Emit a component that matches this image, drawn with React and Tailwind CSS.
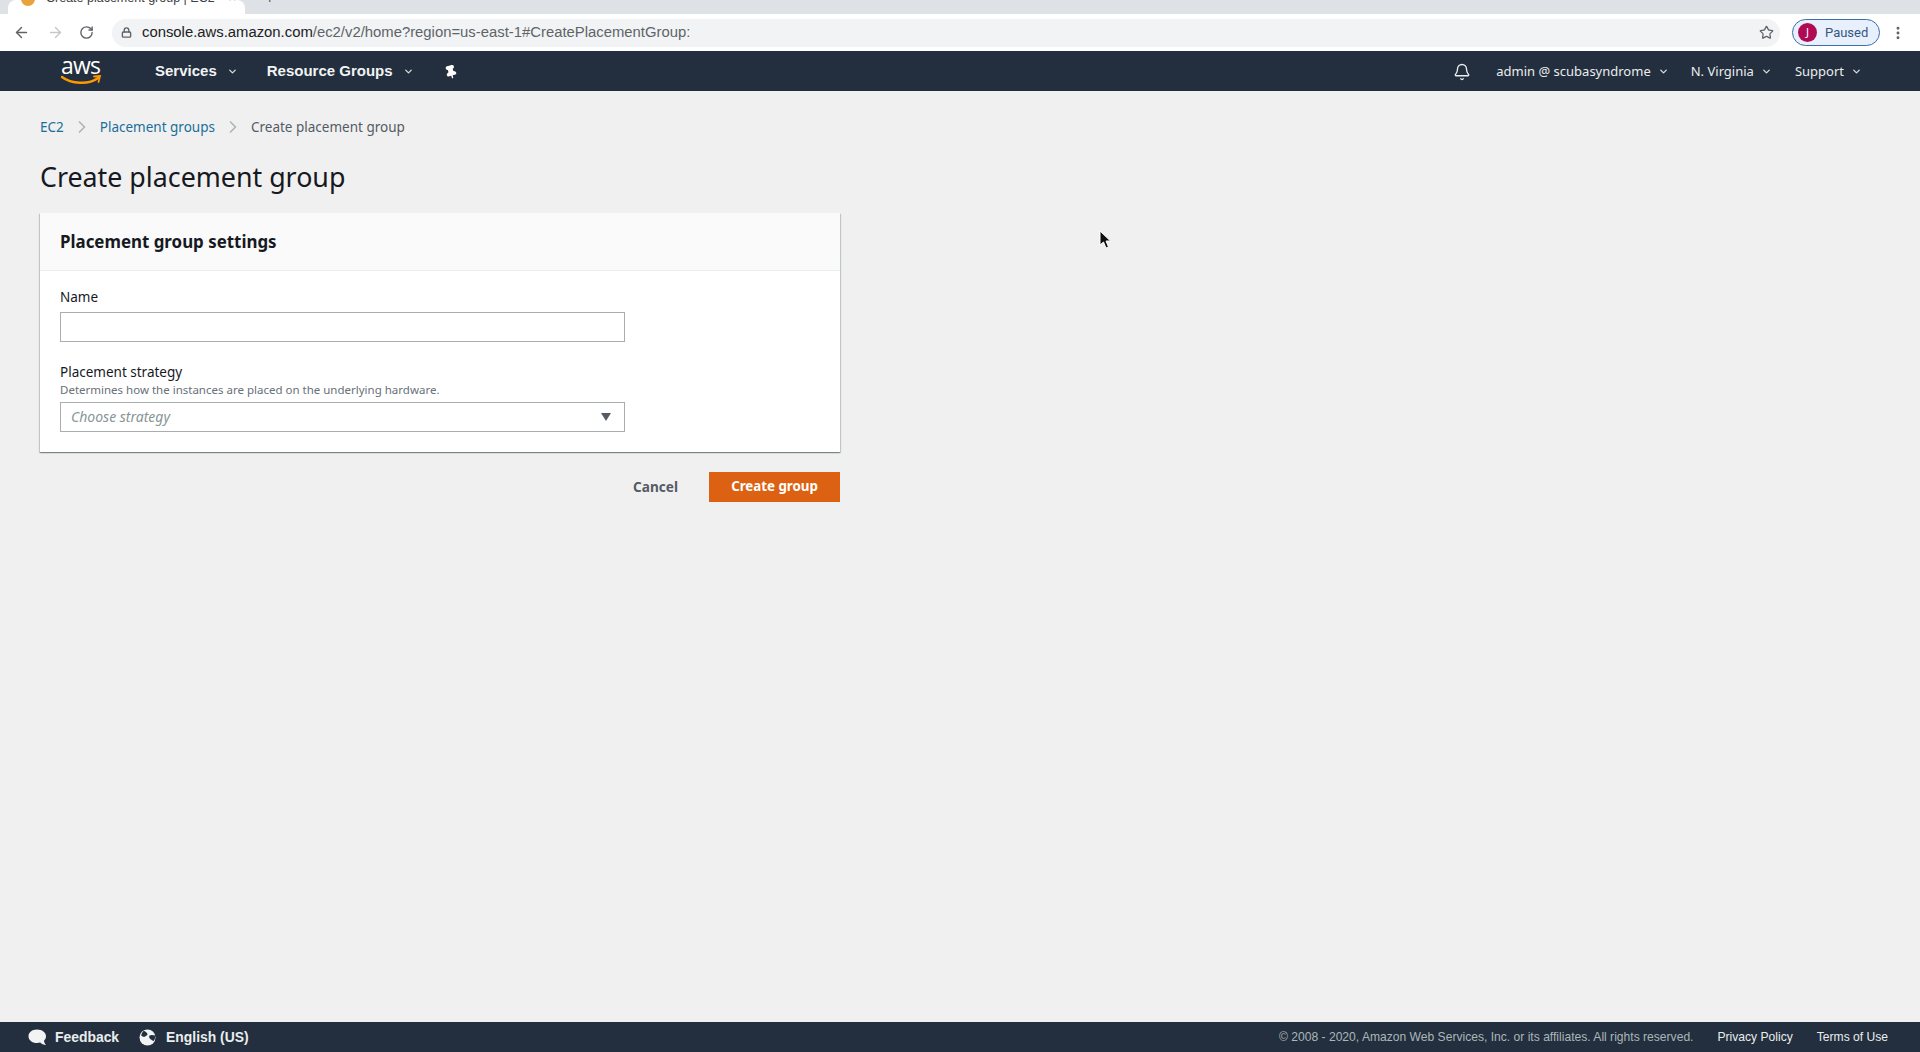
import React from "react";
import { ArrowLeft, ArrowRight, RotateCw, Lock, Star, Bell, ChevronRight, ChevronDown, Pin, MoreVertical } from "lucide-react";

function NavMenu({ label, className, gap = "ml-[7px]" }) {
  return (
    <div className={`flex items-center ${className}`}>
      <span>{label}</span>
      <ChevronDown size={11} strokeWidth={3} className={`${gap} text-[#d5dbdb]`} />
    </div>
  );
}

function AwsLogo() {
  return (
    <svg width="44" height="30" viewBox="0 0 44 30">
      <text x="22" y="17" textAnchor="middle" fontFamily="Open Sans, sans-serif" fontSize="23" fill="#fff" textLength="40">aws</text>
      <path d="M3 20 C12 27 30 28 39 21" stroke="#f90" strokeWidth="2.4" fill="none" strokeLinecap="round" />
      <path d="M35 19.5 L41 19 L39.5 25" stroke="#f90" strokeWidth="1.8" fill="none" strokeLinecap="round" />
    </svg>
  );
}

function FeedbackIcon() {
  return (
    <svg width="19" height="17" viewBox="0 0 19 17" className="ml-[28px]">
      <path d="M9 0.5 C14 0.5 18 3.4 18 7.2 C18 9.2 17.2 10.6 16 11.7 C16.2 13.2 16.8 14.8 18 16 C15.6 15.8 13.6 15 12.2 13.6 C11.2 13.8 10.2 14 9 14 C4 14 0.5 11 0.5 7.2 C0.5 3.4 4 0.5 9 0.5 Z" fill="#f2f3f3" />
    </svg>
  );
}

function GlobeIcon() {
  return (
    <svg width="17" height="17" viewBox="0 0 17 17" className="ml-[20px]">
      <circle cx="8.5" cy="8.5" r="8" fill="#f2f3f3" />
      <path d="M5 1.8 C6.5 3 8 3.4 8.5 5 C8.8 6.4 7 6.6 6 7.6 C5 8.4 3.4 7.4 2.2 6.4 C2.6 4.4 3.6 2.8 5 1.8 Z" fill="#232f3e" />
      <path d="M10.5 6.5 C12 5.8 14 5.8 16 6.6 C16.4 8.4 16 10.6 14.6 12 C13.4 11.6 12.8 10.6 11.6 10.2 C10.4 9.6 9.6 7.4 10.5 6.5 Z" fill="#232f3e" />
    </svg>
  );
}

function Crumb({ children }) {
  return <a className="text-[#1a6f99]">{children}</a>;
}

export default function App() {
  return (
    <div className="relative flex h-[1052px] w-[1920px] flex-col overflow-hidden bg-[#f0f0f0] font-['Noto_Sans',sans-serif]">
      {/* browser tabs */}
      <div className="flex h-[14px] shrink-0 items-end overflow-hidden bg-[#dee1e6]">
        <div className="ml-[8px] flex h-[14px] w-[237px] items-end rounded-t-lg bg-white pb-[8px] pl-[13px] font-['Liberation_Sans',sans-serif] text-[12.5px] leading-[16px] text-[#3c4043]">
          <span className="mr-[11px] h-[14px] w-[14px] shrink-0 rounded-full bg-[#e8a33d]" />
          <span className="whitespace-nowrap">Create placement group | EC2</span>
          <span className="ml-[14px]">×</span>
        </div>
        <span className="ml-[21px] pb-[8px] text-[13px] leading-[16px] text-[#3c4043]">+</span>
      </div>

      {/* browser toolbar */}
      <div className="flex h-[37px] shrink-0 items-center bg-white">
        <ArrowLeft size={17} strokeWidth={2} className="ml-[13px] text-[#5f6368]" />
        <ArrowRight size={17} strokeWidth={2} className="ml-[17px] text-[#c4c7cb]" />
        <RotateCw size={15} strokeWidth={2.2} className="ml-[15px] text-[#5f6368]" />
        <div className="ml-[18px] flex h-[28px] w-[1668px] items-center rounded-full bg-[#f1f3f4] pl-[9px] pr-[6px] font-['Liberation_Sans',sans-serif] text-[14.85px]">
          <Lock size={11} strokeWidth={3} className="text-[#5f6368]" />
          <span className="ml-[10px] text-[#202124]">console.aws.amazon.com</span>
          <span className="text-[#5f6368]">/ec2/v2/home?region=us-east-1#CreatePlacementGroup:</span>
          <Star size={15} strokeWidth={2} className="ml-auto text-[#5f6368]" />
        </div>
        <div className="ml-[12px] flex h-[27px] w-[88px] items-center rounded-full border border-[#3a6ea5] bg-[#e8f0fe] pl-[5px]">
          <div className="flex h-[19px] w-[19px] items-center justify-center rounded-full bg-[#b00a55] text-[11px] text-white">J</div>
          <span className="ml-[8px] font-['Roboto',sans-serif] text-[13px] text-[#35567f]">Paused</span>
        </div>
        <MoreVertical size={16} strokeWidth={2.4} className="ml-[10px] text-[#5f6368]" />
      </div>

      {/* aws nav */}
      <div className="flex h-[40px] shrink-0 items-center bg-[#232f3e] pt-[1px] text-white">
        <div className="ml-[59px] w-[44px]"><AwsLogo /></div>
        <NavMenu label="Services" gap="ml-[10px]" className="ml-[52px] font-['Liberation_Sans',sans-serif] text-[15px] font-bold text-[#f2f3f3]" />
        <NavMenu label="Resource Groups" gap="ml-[10px]" className="ml-[29px] font-['Liberation_Sans',sans-serif] text-[15px] font-bold text-[#f2f3f3]" />
        <Pin size={14} strokeWidth={2.5} fill="#fff" className="ml-[30px] rotate-[-15deg]" />
        <Bell size={18} strokeWidth={1.8} className="ml-auto mr-[25px] text-[#eaeded]" />
        <div className="flex items-center text-[13px] text-[#eaeded]">
          <NavMenu label="admin @ scubasyndrome" />
          <NavMenu label="N. Virginia" className="ml-[22px]" />
          <NavMenu label="Support" className="ml-[23px] mr-[58px]" />
        </div>
      </div>

      {/* content */}
      <div className="flex-1 px-[40px]">
        <div className="mt-[25px] flex h-[22px] items-center text-[13.5px] text-[#545b64]">
          <Crumb>EC2</Crumb>
          <ChevronRight size={20} strokeWidth={2} className="mx-[8px] text-[#aab7b8]" />
          <Crumb>Placement groups</Crumb>
          <ChevronRight size={20} strokeWidth={2} className="mx-[8px] text-[#aab7b8]" />
          <span>Create placement group</span>
        </div>
        <h1 className="mt-[19px] text-[26.8px] leading-[40px] text-[#16191f]">Create placement group</h1>

        <div className="mt-[16px] w-[800px] bg-white shadow-[0_1px_1px_0_rgba(0,28,36,0.3),1px_1px_1px_0_rgba(0,28,36,0.15),-1px_1px_1px_0_rgba(0,28,36,0.15)]">
          <div className="flex h-[58px] items-center border-b border-[#eaeded] bg-[#fafafa] px-[20px] pt-[1px] text-[16.9px] font-bold text-[#16191f]">
            Placement group settings
          </div>
          <div className="px-[20px] pb-[20px] pt-[16px]">
            <label className="block text-[13.5px] leading-[20px] text-[#16191f]">Name</label>
            <input className="mt-[5px] block h-[30px] w-[565px] border border-[#a9adae] bg-white" />
            <label className="mt-[21px] block text-[13.5px] leading-[18px] text-[#16191f]">Placement strategy</label>
            <div className="pt-[1px] text-[11.5px] leading-[16px] text-[#687078]">Determines how the instances are placed on the underlying hardware.</div>
            <div className="mt-[4px] flex h-[30px] w-[565px] items-center justify-between border border-[#a9adae] bg-white pb-[1px] pl-[10px] pr-[13px] text-[14px] italic text-[#879596]">
              Choose strategy
              <span className="h-0 w-0 border-x-[5.5px] border-t-[8px] border-x-transparent border-t-[#545b64]" />
            </div>
          </div>
        </div>

        <div className="mt-[20px] flex w-[800px] items-center justify-end">
          <button className="text-[13.6px] font-bold text-[#545b64]">Cancel</button>
          <button className="ml-[31px] h-[30px] w-[131px] bg-[#dc6113] text-[13.3px] font-bold text-white">Create group</button>
        </div>
      </div>

      {/* footer */}
      <div className="flex h-[30px] shrink-0 items-center bg-[#232f3e] font-['Liberation_Sans',sans-serif] text-[12.1px]">
        <FeedbackIcon />
        <span className="ml-[8px] text-[13.9px] font-bold text-[#eaeded]">Feedback</span>
        <GlobeIcon />
        <span className="ml-[10px] text-[13.9px] font-bold text-[#eaeded]">English (US)</span>
        <span className="ml-auto text-[#aab7b8]">© 2008 - 2020, Amazon Web Services, Inc. or its affiliates. All rights reserved.</span>
        <span className="ml-[24px] text-[#eaeded]">Privacy Policy</span>
        <span className="ml-[24px] mr-[32px] text-[#eaeded]">Terms of Use</span>
      </div>

      {/* mouse cursor */}
      <svg className="absolute left-[1098px] top-[230px]" width="14" height="20" viewBox="0 0 14 20">
        <path d="M2 1 L2 15 L5.5 12 L8 18 L10.5 17 L8 11 L12.5 11 Z" fill="#111" stroke="#fff" strokeWidth="1" />
      </svg>
    </div>
  );
}
